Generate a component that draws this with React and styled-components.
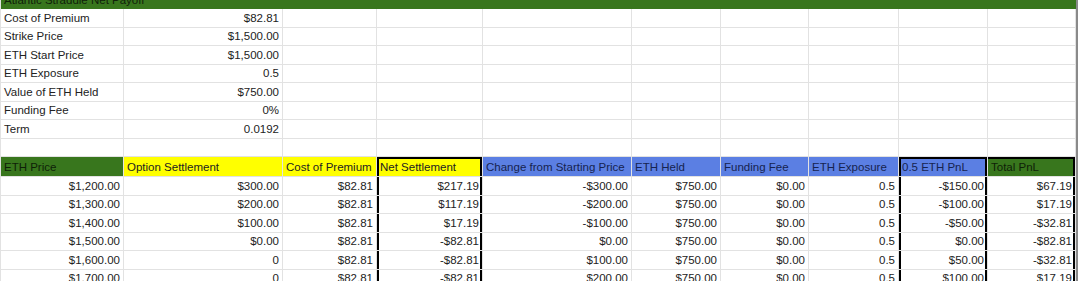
import React from "react"
import styled, { createGlobalStyle } from "styled-components"

const GlobalStyle = createGlobalStyle`
  html, body {
    margin: 0;
    padding: 0;
    background: #fff;
  }
  body {
    font-family: "Liberation Sans", Arial, sans-serif;
  }
`

const COLS = [123, 159, 94, 106, 149, 89, 88, 90, 89, 88]

const GREEN = "#38761d"
const YELLOW = "#ffff00"
const BLUE = "#5b7fe3"

// columns wrapped in the thick black outline
const FRAMES = { 3: { l: true, r: true }, 8: { l: true, r: true }, 9: { r: true } }

const shadowFor = (frame, top) => {
  if (!frame) return "none"
  const parts = []
  if (frame.l) parts.push("inset 2px 0 0 #000")
  if (frame.r) parts.push("inset -2px 0 0 #000")
  if (top) parts.push("inset 0 2px 0 #000")
  return parts.length ? parts.join(", ") : "none"
}

const Viewport = styled.div`
  width: 1080px;
  height: 281px;
  overflow: hidden;
`

const Sheet = styled.div`
  display: grid;
  grid-template-columns: ${COLS.map(w => w + "px").join(" ")} 1fr;
  grid-template-rows: repeat(9, 18.5px) 20px;
  grid-auto-rows: 18.5px;
  margin-top: -9.5px;
  border-left: 1px solid #e2e2e2;
  font-size: 11.5px;
  line-height: 13px;
  color: #222;
`

const Cell = styled.div`
  display: flex;
  align-items: flex-end;
  justify-content: ${p => (p.$right ? "flex-end" : "flex-start")};
  padding: 0 3px 2px;
  border-right: 1px solid #e2e2e2;
  border-bottom: 1px solid #e2e2e2;
  background: ${p => p.$bg || "#fff"};
  color: ${p => p.$ink || "#222"};
  white-space: nowrap;
  overflow: hidden;
  box-shadow: ${p => shadowFor(p.$frame, p.$top)};
`

const Title = styled(Cell)`
  grid-column: 1 / 11;
  background: ${GREEN};
  color: #10210a;
  border-right: none;
  border-bottom: none;
`

const Edge = styled.div`
  border-left: 2px solid #8a8a8a;
  background: #fff;
`

const params = [
  ["Cost of Premium", "$82.81"],
  ["Strike Price", "$1,500.00"],
  ["ETH Start Price", "$1,500.00"],
  ["ETH Exposure", "0.5"],
  ["Value of ETH Held", "$750.00"],
  ["Funding Fee", "0%"],
  ["Term", "0.0192"],
]

const headers = [
  { label: "ETH Price", bg: GREEN, ink: "#0f1f08" },
  { label: "Option Settlement", bg: YELLOW, ink: "#222" },
  { label: "Cost of Premium", bg: YELLOW, ink: "#222" },
  { label: "Net Settlement", bg: YELLOW, ink: "#222" },
  { label: "Change from Starting Price", bg: BLUE, ink: "#16234f" },
  { label: "ETH Held", bg: BLUE, ink: "#16234f" },
  { label: "Funding Fee", bg: BLUE, ink: "#16234f" },
  { label: "ETH Exposure", bg: BLUE, ink: "#16234f" },
  { label: "0.5 ETH PnL", bg: BLUE, ink: "#16234f" },
  { label: "Total PnL", bg: GREEN, ink: "#0f1f08" },
]

const rows = [
  ["$1,200.00", "$300.00", "$82.81", "$217.19", "-$300.00", "$750.00", "$0.00", "0.5", "-$150.00", "$67.19"],
  ["$1,300.00", "$200.00", "$82.81", "$117.19", "-$200.00", "$750.00", "$0.00", "0.5", "-$100.00", "$17.19"],
  ["$1,400.00", "$100.00", "$82.81", "$17.19", "-$100.00", "$750.00", "$0.00", "0.5", "-$50.00", "-$32.81"],
  ["$1,500.00", "$0.00", "$82.81", "-$82.81", "$0.00", "$750.00", "$0.00", "0.5", "$0.00", "-$82.81"],
  ["$1,600.00", "0", "$82.81", "-$82.81", "$100.00", "$750.00", "$0.00", "0.5", "$50.00", "-$32.81"],
  ["$1,700.00", "0", "$82.81", "-$82.81", "$200.00", "$750.00", "$0.00", "0.5", "$100.00", "$17.19"],
  ["$1,800.00", "0", "$82.81", "-$82.81", "$300.00", "$750.00", "$0.00", "0.5", "$150.00", "$67.19"],
]

const blanks = from => COLS.slice(from).map((_, i) => <Cell key={"b" + (from + i)} />)

const App = () => {
  return (
    <Viewport>
      <GlobalStyle />
      <Sheet>
        <Title>Atlantic Straddle Net Payoff</Title>
        <Edge />

        {params.map(([label, value]) => (
          <React.Fragment key={label}>
            <Cell>{label}</Cell>
            <Cell $right>{value}</Cell>
            {blanks(2)}
            <Edge />
          </React.Fragment>
        ))}

        {blanks(0)}
        <Edge />

        {headers.map((h, i) => (
          <Cell key={h.label} $bg={h.bg} $ink={h.ink} $frame={FRAMES[i]} $top>
            {h.label}
          </Cell>
        ))}
        <Edge />

        {rows.map(row => (
          <React.Fragment key={row[0]}>
            {row.map((v, i) => (
              <Cell key={i} $right $frame={FRAMES[i]}>
                {v}
              </Cell>
            ))}
            <Edge />
          </React.Fragment>
        ))}
      </Sheet>
    </Viewport>
  )
}

export default App
